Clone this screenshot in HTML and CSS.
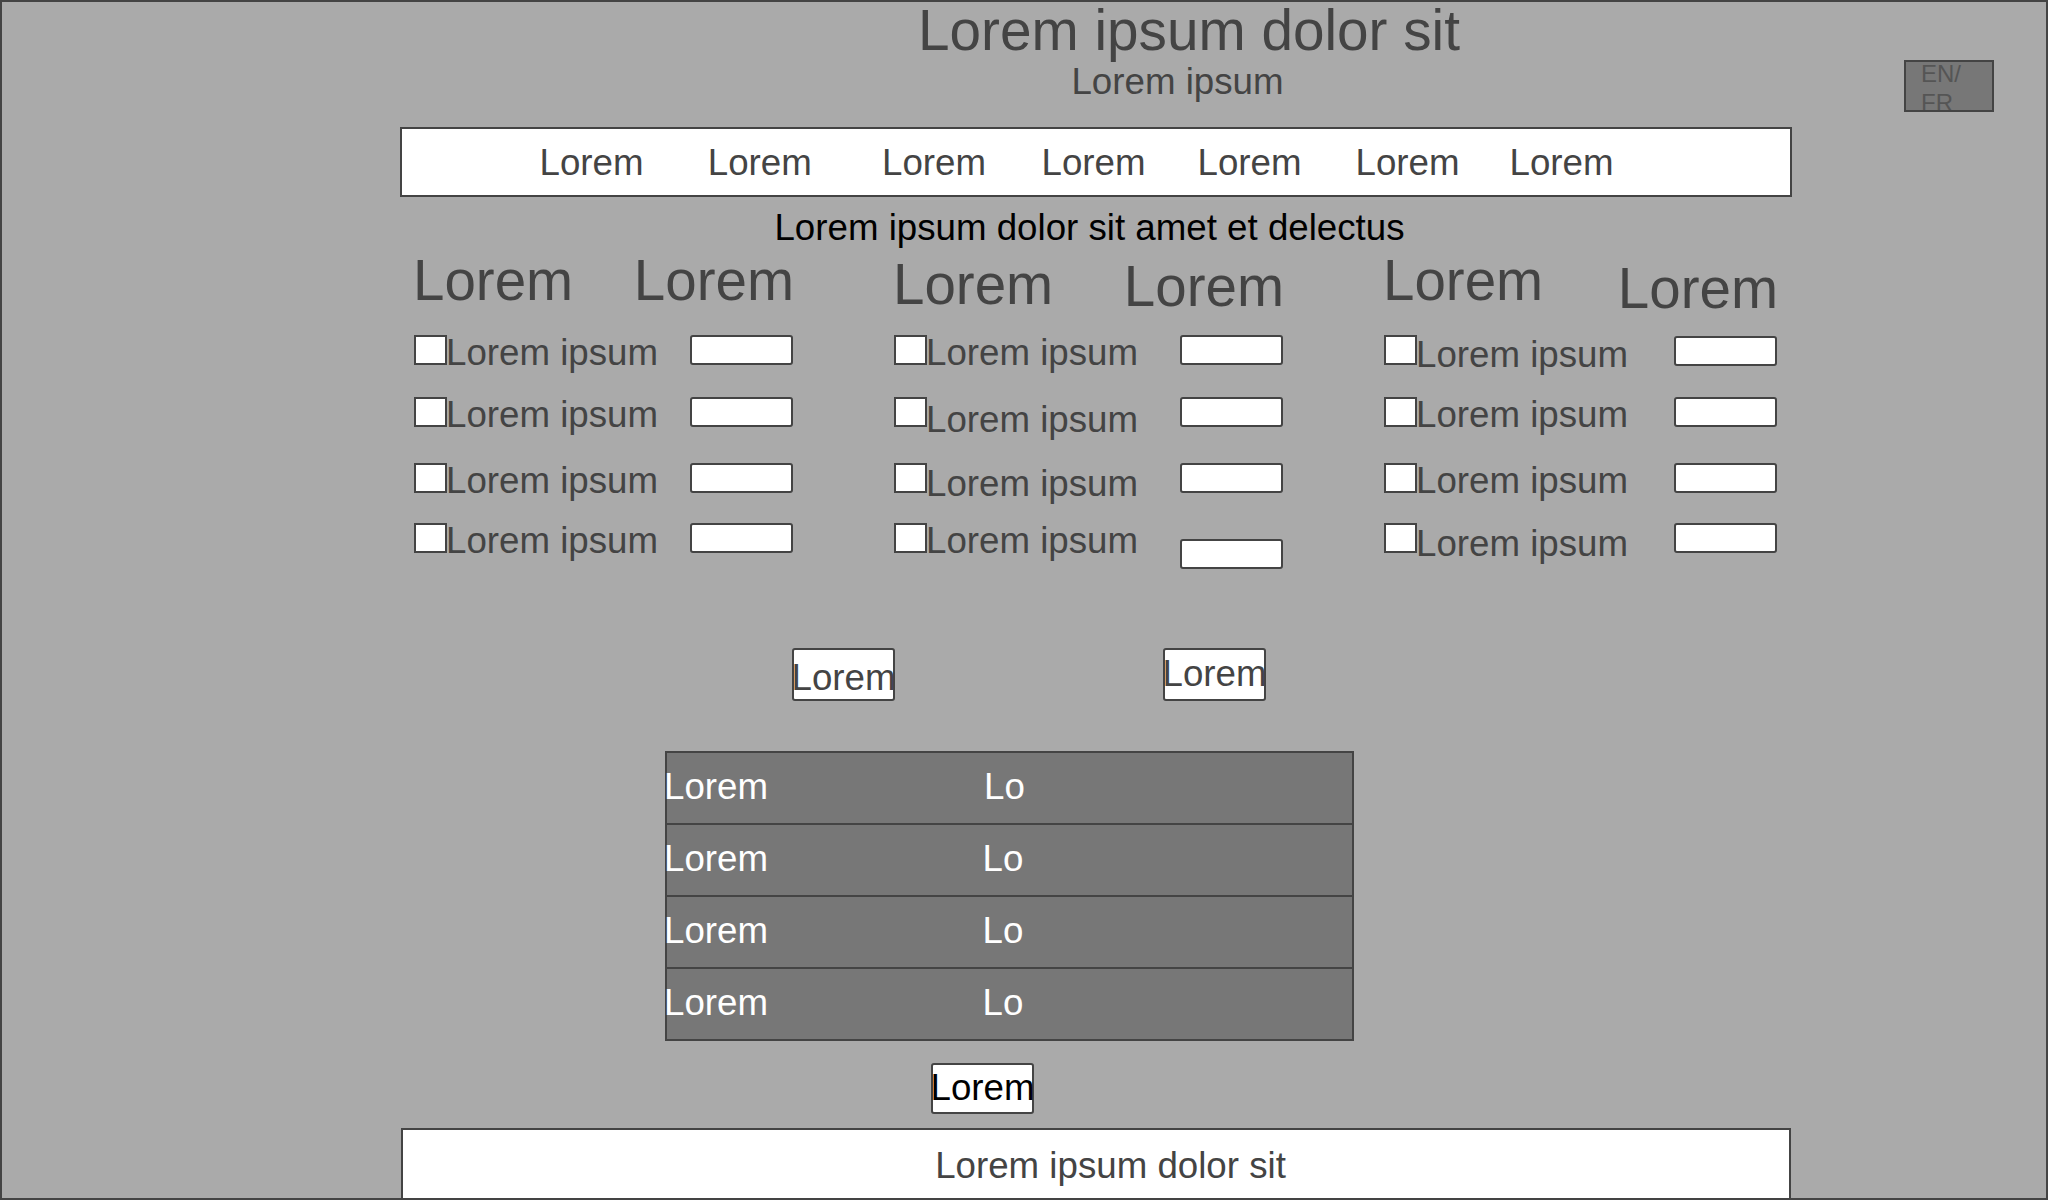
FILE: index.html
```html
<!DOCTYPE html>
<html lang="en">
<head>
<meta charset="utf-8">
<title>Lorem ipsum dolor sit</title>
<link rel="stylesheet" href="styles.css">
</head>
<body>
<div class="page">
  <header class="top">
    <div class="titles">
      <h1 class="title">Lorem ipsum dolor sit</h1>
      <p class="subtitle">Lorem ipsum</p>
    </div>
    <div class="lang"><span class="lang-text">EN/<br>FR</span></div>
  </header>

  <nav class="nav">
    <a class="nav-item" href="#">Lorem</a>
    <a class="nav-item" href="#">Lorem</a>
    <a class="nav-item" href="#">Lorem</a>
    <a class="nav-item" href="#">Lorem</a>
    <a class="nav-item" href="#">Lorem</a>
    <a class="nav-item" href="#">Lorem</a>
    <a class="nav-item" href="#">Lorem</a>
  </nav>

  <h2 class="lead">Lorem ipsum dolor sit amet et delectus</h2>

  <section class="options">
    <div class="col">
      <div class="col-head"><span class="head">Lorem</span><span class="head">Lorem</span></div>
      <div class="opt"><span class="box"></span><span class="opt-label">Lorem ipsum</span><span class="field"></span></div>
      <div class="opt"><span class="box"></span><span class="opt-label">Lorem ipsum</span><span class="field"></span></div>
      <div class="opt"><span class="box"></span><span class="opt-label">Lorem ipsum</span><span class="field"></span></div>
      <div class="opt"><span class="box"></span><span class="opt-label">Lorem ipsum</span><span class="field"></span></div>
    </div>
    <div class="col">
      <div class="col-head"><span class="head dn4">Lorem</span><span class="head dn6">Lorem</span></div>
      <div class="opt"><span class="box"></span><span class="opt-label">Lorem ipsum</span><span class="field"></span></div>
      <div class="opt"><span class="box"></span><span class="opt-label dn5">Lorem ipsum</span><span class="field"></span></div>
      <div class="opt"><span class="box"></span><span class="opt-label dn3">Lorem ipsum</span><span class="field"></span></div>
      <div class="opt"><span class="box"></span><span class="opt-label">Lorem ipsum</span><span class="field dn16"></span></div>
    </div>
    <div class="col">
      <div class="col-head"><span class="head">Lorem</span><span class="head dn8">Lorem</span></div>
      <div class="opt"><span class="box"></span><span class="opt-label dn2">Lorem ipsum</span><span class="field dn1"></span></div>
      <div class="opt"><span class="box"></span><span class="opt-label">Lorem ipsum</span><span class="field"></span></div>
      <div class="opt"><span class="box"></span><span class="opt-label">Lorem ipsum</span><span class="field"></span></div>
      <div class="opt"><span class="box"></span><span class="opt-label dn3">Lorem ipsum</span><span class="field"></span></div>
    </div>
  </section>

  <div class="actions">
    <div class="btn btn-a">Lorem</div>
    <div class="btn btn-b">Lorem</div>
  </div>

  <div class="table">
    <div class="trow"><span class="c1">Lorem</span><span class="c2 c2-first">Lo</span></div>
    <div class="trow"><span class="c1">Lorem</span><span class="c2">Lo</span></div>
    <div class="trow"><span class="c1">Lorem</span><span class="c2">Lo</span></div>
    <div class="trow"><span class="c1">Lorem</span><span class="c2">Lo</span></div>
  </div>

  <div class="more">
    <div class="btn btn-c">Lorem</div>
  </div>

  <footer class="foot">Lorem ipsum dolor sit</footer>
</div>
</body>
</html>
```

FILE: styles.css
```css
* {
  box-sizing: border-box;
}

html,
body {
  margin: 0;
  padding: 0;
  background: #aaa;
}

body {
  font-family: "Liberation Sans", Arial, Helvetica, sans-serif;
  color: #444;
}

.page {
  width: 2048px;
  height: 1200px;
  border: 2px solid #444;
  background: #aaa;
  overflow: hidden;
}

/* ---------- header ---------- */
.top {
  display: flex;
  align-items: flex-start;
  height: 110px;
}

.titles {
  margin-left: 827px;
  width: 720px;
  text-align: center;
}

.title {
  margin: 0;
  font-size: 56.7px;
  line-height: 57px;
  font-weight: 400;
  color: #444;
  white-space: nowrap;
}

.subtitle {
  margin: 4px 0 0;
  padding-right: 23px;
  font-size: 36.7px;
  line-height: 37px;
  color: #444;
}

.lang {
  margin: 58px 52px 0 auto;
  width: 90px;
  height: 52px;
  background: #777;
  border: 2px solid #444;
  overflow: hidden;
  padding-left: 15px;
  font-size: 24px;
  line-height: 29px;
  color: #555;
}

.lang-text {
  display: block;
  margin-top: -3px;
}

/* ---------- nav ---------- */
.nav {
  margin: 15px 0 0 398px;
  width: 1392px;
  height: 70px;
  background: #fff;
  border: 2px solid #444;
  display: flex;
  align-items: center;
  padding-left: 137.5px;
  font-size: 36.7px;
  line-height: 37px;
}

.nav-item {
  color: #444;
  text-decoration: none;
  white-space: nowrap;
}

.nav-item:nth-child(2) { margin-left: 64.3px; }
.nav-item:nth-child(3) { margin-left: 70.2px; }
.nav-item:nth-child(4) { margin-left: 55.5px; }
.nav-item:nth-child(5) { margin-left: 52px; }
.nav-item:nth-child(6) { margin-left: 54px; }
.nav-item:nth-child(7) { margin-left: 50px; }

/* ---------- lead ---------- */
.lead {
  margin: 12px 0 0 398px;
  width: 1392px;
  height: 37px;
  padding-right: 13px;
  text-align: center;
  font-size: 36.7px;
  line-height: 37px;
  font-weight: 400;
  color: #000;
}

/* ---------- option columns ---------- */
.options {
  margin: 6px 0 0 412px;
  display: grid;
  grid-template-columns: 379px 389px 393px;
  column-gap: 101px;
  align-items: start;
}

.col {
  display: flex;
  flex-direction: column;
}

.col-head {
  display: flex;
  justify-content: space-between;
  align-items: flex-start;
  height: 57px;
  margin: 0 -1px 0 -1px;
}

.head {
  font-size: 56.5px;
  line-height: 57px;
  color: #444;
  white-space: nowrap;
}

.opt {
  display: flex;
  align-items: flex-start;
  height: 30px;
}

.opt:nth-child(2) { margin-top: 26px; }
.opt:nth-child(3) { margin-top: 32px; }
.opt:nth-child(4) { margin-top: 36px; }
.opt:nth-child(5) { margin-top: 30px; }

.box {
  flex: 0 0 33px;
  height: 30px;
  background: #fff;
  border: 2px solid #444;
}

.opt-label {
  margin-left: -1px;
  font-size: 36.7px;
  line-height: 35px;
  color: #444;
  white-space: nowrap;
}

.field {
  margin-left: auto;
  flex: 0 0 103px;
  height: 30px;
  background: #fff;
  border: 2px solid #444;
  border-radius: 3px;
}

.dn1 { margin-top: 1px; }
.dn2 { margin-top: 2px; }
.dn3 { margin-top: 3px; }
.dn4 { margin-top: 4px; }
.dn5 { margin-top: 5px; }
.dn6 { margin-top: 6px; }
.dn8 { margin-top: 8px; }
.dn16 { margin-top: 16px; }

/* ---------- buttons ---------- */
.actions {
  display: flex;
  gap: 268px;
  margin: 95px 0 0 790px;
  height: 53px;
}

.btn {
  width: 103px;
  height: 53px;
  background: #fff;
  border: 2px solid #444;
  border-radius: 3px;
  display: flex;
  justify-content: center;
  align-items: flex-start;
  font-size: 36.7px;
  line-height: 37px;
  color: #444;
  white-space: nowrap;
}

.btn-a { padding-top: 9px; }
.btn-b { padding-top: 5px; }

/* ---------- table ---------- */
.table {
  margin: 50px 0 0 663px;
  width: 689px;
  border: 2px solid #444;
  background: #777;
}

.trow {
  display: flex;
  align-items: center;
  height: 72px;
  border-bottom: 2px solid #444;
  padding-bottom: 4px;
  color: #fff;
  font-size: 36.7px;
  line-height: 37px;
}

.trow:last-child {
  height: 70px;
  border-bottom: 0;
}

.c1 {
  flex: 0 0 318.5px;
  margin-left: -3px;
}

.c2-first {
  margin-left: 1.5px;
}

/* ---------- bottom ---------- */
.more {
  margin: 22px 0 0 929px;
}

.btn-c {
  height: 51px;
  color: #000;
  align-items: center;
  padding-bottom: 2px;
}

.foot {
  margin: 14px 0 0 399px;
  width: 1390px;
  height: 72px;
  background: #fff;
  border: 2px solid #444;
  padding: 17px 0 0 29px;
  text-align: center;
  font-size: 36.7px;
  line-height: 37px;
  color: #444;
}
```
